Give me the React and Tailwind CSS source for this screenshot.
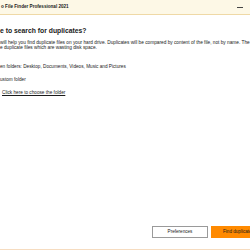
import React from "react";

const App = () => {
    return (
        <div
            className="w-[250px] h-[250px] overflow-hidden bg-white flex flex-col text-[#1a1a1a]"
            style={{ fontFamily: '"Liberation Sans", Arial, sans-serif' }}
        >
            {/* title bar */}
            <div className="h-[15px] shrink-0 bg-[#fdf8e6] border-b border-[#efd9a6] flex items-center justify-between">
                <span className="text-[4.6px] font-bold whitespace-nowrap leading-none pl-[1px]">
                    o File Finder Professional 2021
                </span>
                <div className="w-[6px] h-[1px] bg-[#444] mr-[7px]" />
            </div>

            {/* wizard page */}
            <div className="flex-1 flex flex-col">
                <h1 className="mt-[13px] text-[6.8px] font-bold leading-none whitespace-nowrap">
                    e to search for duplicates?
                </h1>

                <div className="mt-[5px] text-[4.75px] leading-[5.5px] whitespace-nowrap">
                    <p>
                        will help you find duplicate files on your hard drive. Duplicates will be compared by content of the file, not by name. The
                    </p>
                    <p>e duplicate files which are wasting disk space.</p>
                </div>

                <div className="mt-[13px] flex flex-col gap-[8px] text-[4.7px] leading-[5px] whitespace-nowrap">
                    <div>en folders: Desktop, Documents, Videos, Music and Pictures</div>
                    <div>ustom folder</div>
                    <div className="pl-[2px]">
                        <span className="underline">Click here to choose the folder</span>
                    </div>
                </div>

                <div className="flex-1" />

                <div className="flex justify-end gap-[3px] mb-[11px]">
                    <button className="w-[56px] h-[12px] shrink-0 bg-white border border-[#9a9a9a] text-[4.6px] leading-none">
                        Preferences
                    </button>
                    <div className="w-[39px] h-[12px] shrink-0 overflow-hidden bg-[#ff8a00] text-[4.6px] whitespace-nowrap flex items-center pl-[12px]">
                        Find duplicates
                    </div>
                </div>
            </div>

            <div className="h-[1px] shrink-0 bg-[#f6dcc0]" />
        </div>
    );
};

export default App;
